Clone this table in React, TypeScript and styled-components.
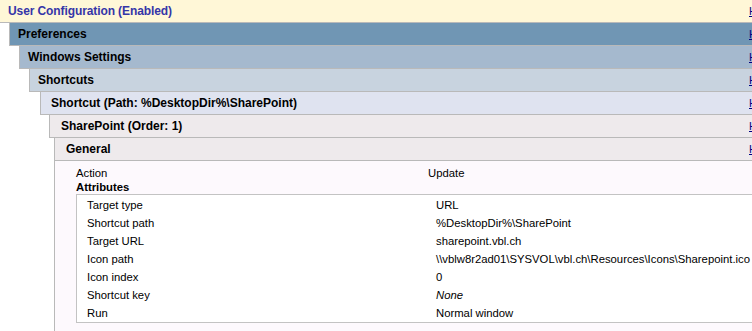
import React from "react";
import styled, { createGlobalStyle } from "styled-components";

const Global = createGlobalStyle`
  html, body { margin: 0; padding: 0; background: #ffffff; overflow: hidden; }
  body { font-family: "Liberation Sans", Arial, sans-serif; width: 752px; height: 331px; }
`;

const Page = styled.div`
  width: 752px;
  height: 331px;
  overflow: hidden;
  background: #ffffff;
`;

const Header = styled.div<{ $bg: string; $color?: string; $pad?: number }>`
  display: flex;
  align-items: center;
  justify-content: space-between;
  height: 22px;
  background: ${(p) => p.$bg};
  border-left: 1px solid #b9b9b9;
  border-bottom: 1px solid #b9b9b9;
  padding-left: ${(p) => p.$pad ?? 8}px;
  font-size: 12px;
  font-weight: bold;
  color: ${(p) => p.$color ?? "#000000"};
  white-space: nowrap;
  overflow: hidden;
`;

const TopHeader = styled(Header)`
  border-left: none;
  padding-left: 8px;
  letter-spacing: -0.1px;
`;

const HideLink = styled.span`
  font-weight: normal;
  font-size: 11px;
  color: #000080;
  text-decoration: underline;
  flex: none;
  width: 3px;
  overflow: hidden;
`;

const Section = styled.div<{ $indent: number }>`
  margin-left: ${(p) => p.$indent}px;
`;

const Content = styled.div`
  background: #fdf9fd;
  border-left: 1px solid #b9b9b9;
  padding: 4px 0 12px 21px;
  min-height: 200px;
`;

const FieldRow = styled.div`
  display: grid;
  grid-template-columns: 352px 1fr;
  font-size: 11.3px;
  color: #000000;
  height: 16px;
  line-height: 16px;
`;

const SubTitle = styled.div`
  font-size: 11.3px;
  font-weight: bold;
  height: 12px;
  line-height: 12px;
  color: #000;
`;

const Table = styled.div`
  margin-top: 1px;
  background: #ffffff;
  border: 1px solid #c3c3c3;
  border-right: none;
  padding: 1px 0 0 10px;
`;

const TRow = styled.div`
  display: grid;
  grid-template-columns: 349px 1fr;
  height: 18px;
  line-height: 18px;
  font-size: 11.3px;
  color: #000;
  white-space: nowrap;
`;

const Val = styled.span<{ $italic?: boolean }>`
  font-style: ${(p) => (p.$italic ? "italic" : "normal")};
`;

const rows: [string, string, boolean?][] = [
  ["Target type", "URL"],
  ["Shortcut path", "%DesktopDir%\\SharePoint"],
  ["Target URL", "sharepoint.vbl.ch"],
  ["Icon path", "\\\\vblw8r2ad01\\SYSVOL\\vbl.ch\\Resources\\Icons\\Sharepoint.ico"],
  ["Icon index", "0"],
  ["Shortcut key", "None", true],
  ["Run", "Normal window"],
];

export default function App() {
  return (
    <Page>
      <Global />
      <TopHeader $bg="#fff7d7" $color="#3535a8">
        <span>User Configuration (Enabled)</span>
        <HideLink>Hide</HideLink>
      </TopHeader>
      <Section $indent={9}>
        <Header $bg="#7096b4">
          <span>Preferences</span>
          <HideLink>Hide</HideLink>
        </Header>
        <Section $indent={10}>
          <Header $bg="#a5b9ce">
            <span>Windows Settings</span>
            <HideLink>Hide</HideLink>
          </Header>
          <Section $indent={10}>
            <Header $bg="#c8d3df">
              <span>Shortcuts</span>
              <HideLink>Hide</HideLink>
            </Header>
            <Section $indent={11}>
              <Header $bg="#dfe3f0" $pad={10}>
                <span>Shortcut (Path: %DesktopDir%\SharePoint)</span>
                <HideLink>Hide</HideLink>
              </Header>
              <Section $indent={9}>
                <Header $bg="#eeeaec" $pad={11}>
                  <span>SharePoint (Order: 1)</span>
                  <HideLink>Hide</HideLink>
                </Header>
                <Section $indent={5}>
                  <Header $bg="#eeeaec" $pad={11}>
                    <span>General</span>
                    <HideLink>Hide</HideLink>
                  </Header>
                  <Content>
                    <FieldRow>
                      <span>Action</span>
                      <span>Update</span>
                    </FieldRow>
                    <SubTitle>Attributes</SubTitle>
                    <Table>
                      {rows.map(([k, v, it]) => (
                        <TRow key={k}>
                          <span>{k}</span>
                          <Val $italic={it}>{v}</Val>
                        </TRow>
                      ))}
                    </Table>
                  </Content>
                </Section>
              </Section>
            </Section>
          </Section>
        </Section>
      </Section>
    </Page>
  );
}
